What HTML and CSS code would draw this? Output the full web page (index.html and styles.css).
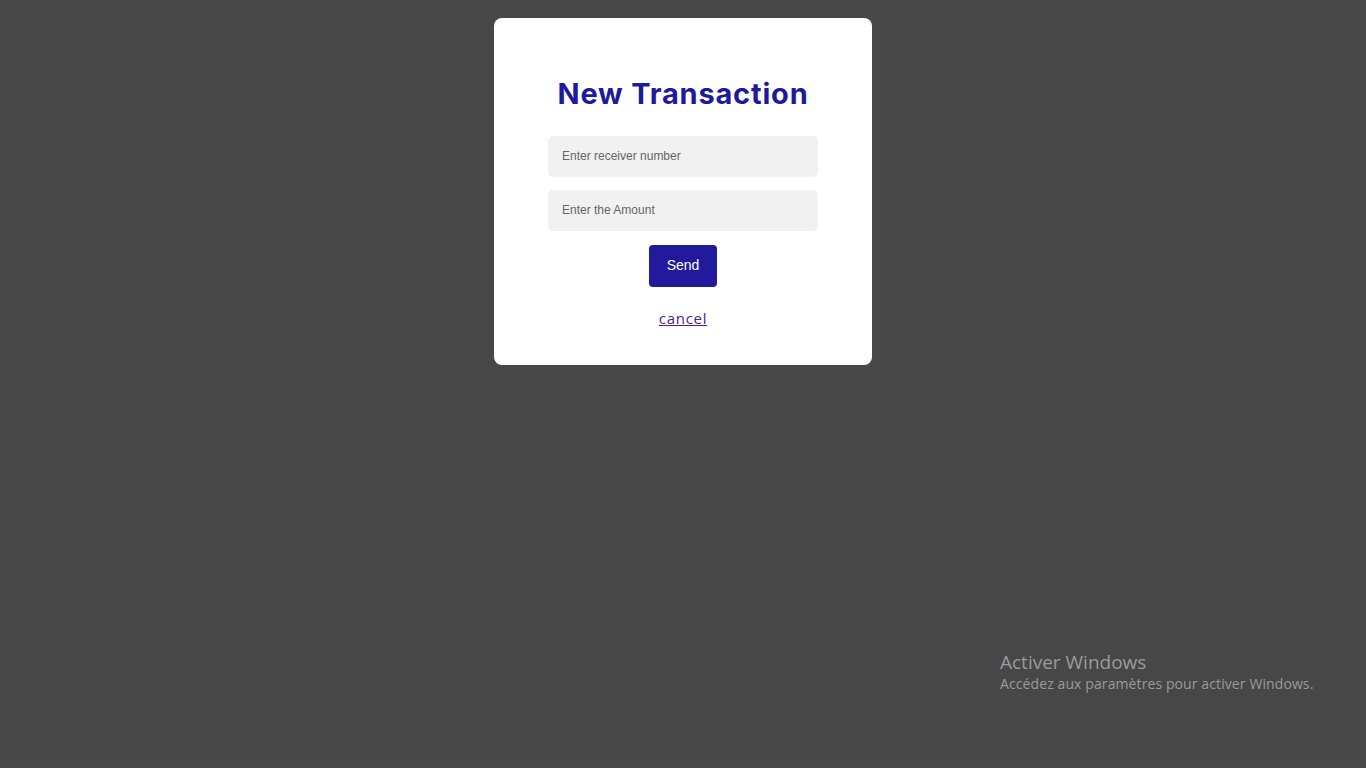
FILE: index.html
```html
<!DOCTYPE html>
<html lang="en">
<head>
<meta charset="utf-8">
<title>New Transaction</title>
<link rel="stylesheet" href="styles.css">
</head>
<body>
<div class="modal">
  <h2 class="title">New Transaction</h2>
  <input class="field" type="text" placeholder="Enter receiver number">
  <input class="field" type="text" placeholder="Enter the Amount">
  <button class="send" type="button">Send</button>
  <a class="cancel" href="#">cancel</a>
</div>
<div class="watermark">
  <div class="wm-title">Activer Windows</div>
  <div class="wm-sub">Accédez aux paramètres pour activer Windows.</div>
</div>
</body>
</html>
```
FILE: styles.css
```css
html, body {
  margin: 0;
  padding: 0;
  height: 100%;
}
body {
  background: #474747;
  font-family: "Liberation Sans", Arial, sans-serif;
  position: relative;
  overflow: hidden;
}
.modal {
  box-sizing: border-box;
  width: 378px;
  margin: 18px auto 0;
  background: #ffffff;
  border-radius: 8px;
  padding: 59px 54px 36px;
  display: flex;
  flex-direction: column;
  align-items: center;
}
.title {
  margin: 0 0 25px;
  font-family: Inter, "Open Sans", sans-serif;
  font-weight: 700;
  font-size: 29px;
  line-height: 34px;
  color: #1f1a9c;
  letter-spacing: 0.8px;
}
.field {
  box-sizing: border-box;
  width: 270px;
  height: 41px;
  border: none;
  outline: none;
  border-radius: 5px;
  background: #f1f1f1;
  padding: 0 14px 1px;
  font-family: "Liberation Sans", Arial, sans-serif;
  font-size: 12px;
  color: #333;
  margin-bottom: 13px;
}
.field + .field {
  margin-bottom: 14px;
}
.field::placeholder {
  color: #666666;
}
.send {
  width: 68px;
  height: 42px;
  border: none;
  border-radius: 4px;
  background: #221a9c;
  color: #ffffff;
  font-family: "Liberation Sans", Arial, sans-serif;
  font-size: 14px;
  padding: 0 0 2px;
  cursor: pointer;
  margin-bottom: 20px;
}
.cancel {
  font-family: "Open Sans", sans-serif;
  font-size: 15px;
  line-height: 22px;
  letter-spacing: 0.7px;
  color: #4a1f96;
  text-decoration: underline;
}
.watermark {
  position: absolute;
  left: 1000px;
  top: 650px;
  color: #9a9a9a;
  font-family: "Open Sans", "Noto Sans", sans-serif;
}
.wm-title {
  font-size: 19px;
  line-height: 24px;
}
.wm-sub {
  font-size: 14px;
  line-height: 20px;
  letter-spacing: 0.1px;
}
```
